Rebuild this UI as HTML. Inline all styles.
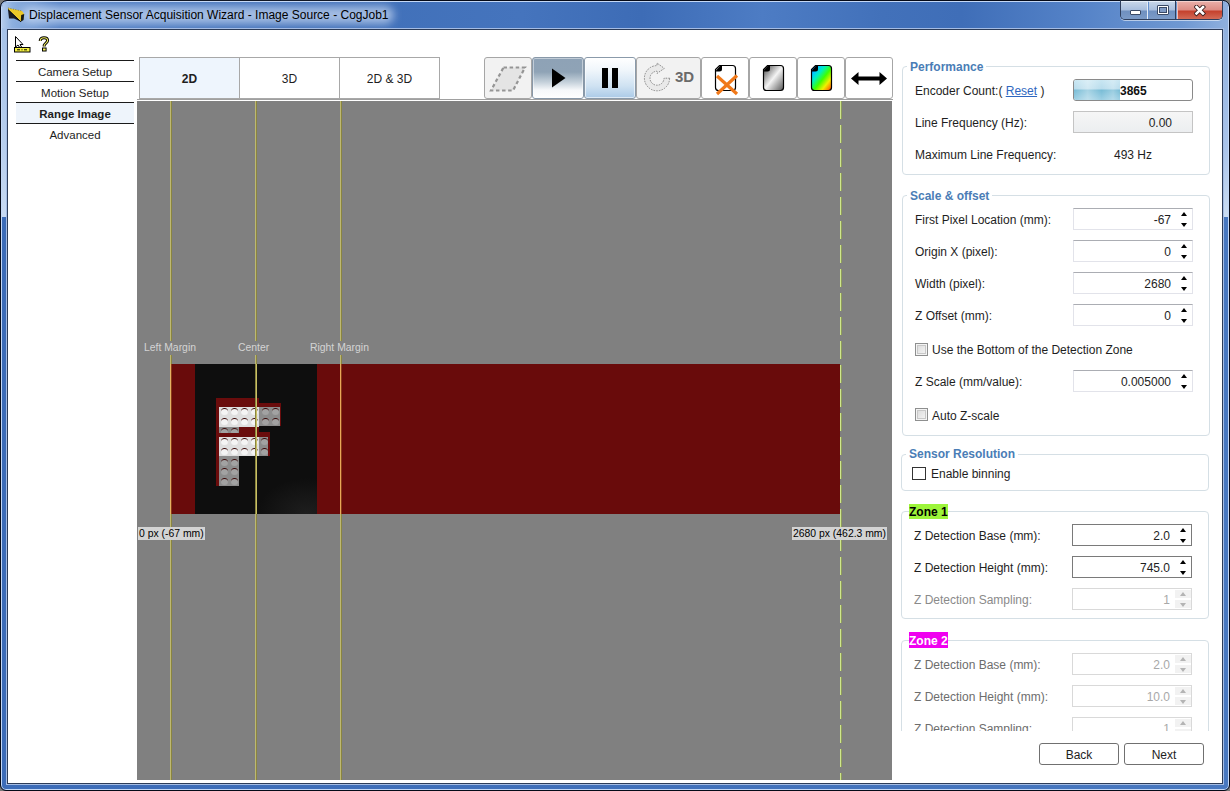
<!DOCTYPE html>
<html><head><meta charset="utf-8">
<style>
*{box-sizing:border-box;margin:0;padding:0}
html,body{width:1230px;height:791px;overflow:hidden;background:#7a7a7a}
body{position:relative;font-family:"Liberation Sans",sans-serif;font-size:12px;color:#1e1e1e}
.a{position:absolute}
.t{position:absolute;white-space:nowrap;line-height:14px;font-size:12px}
#frame{left:0;top:0;width:1230px;height:791px;border:1px solid #050a18;border-radius:7px 7px 6px 6px;box-shadow:inset 0 0 0 1px #c4d8f6;
 background:linear-gradient(90deg,#3c6cb8 0,#4070ba 600px,#4878c0 1230px)}
#tbar{left:2px;top:2px;width:1226px;height:27px;border-radius:5px 5px 0 0;
 background:linear-gradient(90deg,#b4cbeb 0px,#8eb0df 10px,#4f7ec4 58px,#3f6fb8 300px,#4574bd 520px,#3d6cb6 640px,#4d7cc4 760px,#4271ba 880px,#3f6eb8 960px,#5583c8 1080px,#6f98d2 1180px,#8fb0de 1226px)}
#glow{left:22px;top:6px;width:372px;height:18px;border-radius:9px;background:rgba(222,234,252,.62);filter:blur(4px)}
#client{left:7px;top:29px;width:1216px;height:755px;border:1px solid #2c3c58;background:#fff;box-shadow:0 0 0 1px #a4bce4}

.grp{position:absolute;border:1px solid #d5dfe5;border-radius:4px}
.gt{position:absolute;white-space:nowrap;line-height:14px;font-size:12px;font-weight:bold;color:#4a7db6;background:#fff;padding:0 3px}
.sp{position:absolute;width:120px;height:22px;background:#fff;border:1px solid #e2e3ea;border-top-color:#abadb3}
.sp .v{position:absolute;right:21px;top:4px;line-height:14px;font-size:12px;text-align:right}
.sp .u{position:absolute;left:107px;top:3px;width:0;height:0;border-left:3.5px solid transparent;border-right:3.5px solid transparent;border-bottom:4px solid #000}
.sp .d{position:absolute;left:107px;top:14px;width:0;height:0;border-left:3.5px solid transparent;border-right:3.5px solid transparent;border-top:4px solid #000}
.sp.f{border-color:#7a7a7a}
.sp.x{border-color:#d9d9d9;background:#fff}
.sp.x .v{color:#a8a8a8}
.sp.x .bb{position:absolute;left:102px;top:1px;width:16px;height:18px;background:linear-gradient(#f2f2f2 0,#f2f2f2 8px,#fff 8px,#fff 10px,#f2f2f2 10px,#f2f2f2 18px)}
.sp.x .u{border-bottom-color:#b4b4b4}
.sp.x .d{border-top-color:#b4b4b4}
.cb{position:absolute;width:13px;height:13px;border:1px solid #8e8f8f;background:linear-gradient(135deg,#d8d8d8,#f8f8f8);box-shadow:inset 0 0 0 1px #f4f4f4,inset 0 0 0 2px #c8c8c8}
</style></head><body>
<div id="frame" class="a"></div>
<div id="tbar" class="a"></div>
<div id="glow" class="a"></div>
<div class="a" style="left:2px;top:28px;width:5px;height:189px;background:linear-gradient(#a6c2e8,#b8cfee 120px,#c8daf2 189px)"></div>
<div class="a" style="left:1223px;top:28px;width:5px;height:189px;background:linear-gradient(#8fb0de,#aac4ea 120px,#cadcf2 189px)"></div>
<div id="client" class="a"></div>
<!-- title -->
<svg class="a" style="left:7px;top:7px" width="19" height="17" viewBox="0 0 19 17">
 <path d="M1 1 L15 4 L17.2 7 L14 14.5 L1 2.5 Z" fill="#ecc828"/>
 <path d="M1 1 L15 4" stroke="#7a6a20" stroke-width="0.7" stroke-dasharray="1 1.5"/>
 <path d="M1 2.5 L2 11.5 L7 11.5 L13.8 14.8 Z" fill="#1c1c24"/>
 <path d="M14.2 8 L17.2 7 L16.6 13 L13.8 14.8 Z" fill="#1a1a10"/>
 <path d="M1 2.5 L13.8 14.8" stroke="#000" stroke-width="1"/>
</svg>
<div class="t" style="left:29px;top:8px;font-size:12px;color:#000">Displacement Sensor Acquisition Wizard - Image Source - CogJob1</div>
<!-- window buttons -->
<div class="a" style="left:1120px;top:0px;width:103px;height:20px;border:1px solid #2e3e5c;border-top-color:#1a2434;border-radius:0 0 5px 5px;overflow:hidden;box-shadow:0 1px 0 rgba(255,255,255,.55)">
 <div class="a" style="left:0;top:0;width:27px;height:19px;background:linear-gradient(#cad8ea 0,#a8bedd 9px,#6f90c0 10px,#7d9cc8 19px);border-right:1px solid #e4ecf6;box-shadow:inset 0 1px 0 #e8f0fa"></div>
 <div class="a" style="left:28px;top:0;width:27px;height:19px;background:linear-gradient(#cad8ea 0,#a8bedd 9px,#6f90c0 10px,#7d9cc8 19px);border-right:1px solid #2e3e5c;box-shadow:inset 0 1px 0 #e8f0fa"></div>
 <div class="a" style="left:56px;top:0;width:46px;height:19px;background:linear-gradient(#eab0aa 0,#dc8c84 9px,#c4402c 10px,#d4705c 19px);box-shadow:inset 0 1px 0 #f4d0cc,inset 1px 0 0 #f0c0b8"></div>
 <div class="a" style="left:9px;top:9px;width:11px;height:5px;background:#fff;border:1px solid #3a4a66;border-radius:1px"></div>
 <div class="a" style="left:36px;top:4px;width:12px;height:10px;border:1px solid #3a4a66;border-radius:1px;background:#fff"></div>
 <div class="a" style="left:38px;top:6px;width:8px;height:6px;background:#7f9ac4;border:1px solid #3a4a66"></div>
 <svg class="a" style="left:73px;top:4px" width="12" height="12" viewBox="0 0 12 12"><path d="M2.5 2 L9 8.5 M9 2 L2.5 8.5" stroke="#3a2020" stroke-width="4.4" stroke-linecap="square"/><path d="M2.5 2 L9 8.5 M9 2 L2.5 8.5" stroke="#fff" stroke-width="2.6" stroke-linecap="square"/></svg>
</div>
<!-- toolbar small icons -->
<svg class="a" style="left:13px;top:35px" width="18" height="18" viewBox="0 0 18 18">
 <path d="M2.5 1.5 L2.5 12 L5 10 L7 13 L8.5 12 L7 9.5 L10 9.5 Z" fill="#fff" stroke="#000" stroke-width="1"/>
 <rect x="1.5" y="12.5" width="15.5" height="4.5" fill="#f4f040" stroke="#000" stroke-width="1"/>
 <path d="M4 14.8 H7 M8.5 14.8 H9.5 M11 14.8 H14" stroke="#000" stroke-width="1"/>
</svg>
<svg class="a" style="left:37px;top:35px" width="14" height="18" viewBox="0 0 14 18">
 <path d="M3.2 6 C3.2 3.6 4.8 2.8 7 2.8 C9.4 2.8 10.6 4 10.6 5.6 C10.6 7.6 8 8.2 7.2 10.2 L7.2 11.6" fill="none" stroke="#000" stroke-width="3"/>
 <path d="M3.2 6 C3.2 3.6 4.8 2.8 7 2.8 C9.4 2.8 10.6 4 10.6 5.6 C10.6 7.6 8 8.2 7.2 10.2 L7.2 11.6" fill="none" stroke="#f4f060" stroke-width="1.1"/>
 <rect x="5.5" y="13" width="3.6" height="3" fill="#f4f060" stroke="#000" stroke-width="1"/>
</svg>
<!-- left nav -->
<div class="a" style="left:16px;top:60px;width:118px;height:1px;background:#1a1a1a"></div>
<div class="a" style="left:16px;top:81px;width:118px;height:1px;background:#1a1a1a"></div>
<div class="a" style="left:16px;top:102px;width:118px;height:1px;background:#1a1a1a"></div>
<div class="a" style="left:16px;top:103px;width:118px;height:20px;background:#eef4fb"></div>
<div class="a" style="left:16px;top:123px;width:118px;height:1px;background:#1a1a1a"></div>
<div class="t" style="left:16px;width:118px;text-align:center;font-size:11.5px;top:65px">Camera Setup</div>
<div class="t" style="left:16px;width:118px;text-align:center;font-size:11.5px;top:86px">Motion Setup</div>
<div class="t" style="left:16px;width:118px;text-align:center;font-size:11.5px;top:107px;font-weight:bold">Range Image</div>
<div class="t" style="left:16px;width:118px;text-align:center;font-size:11.5px;top:128px">Advanced</div>

<!-- tabs -->
<div class="a" style="left:139px;top:57px;width:101px;height:42px;border:1px solid #a8a8a8;background:#eef5fd"></div>
<div class="a" style="left:239px;top:57px;width:101px;height:42px;border:1px solid #a8a8a8;background:#fff"></div>
<div class="a" style="left:339px;top:57px;width:101px;height:42px;border:1px solid #a8a8a8;background:#fff"></div>
<div class="t" style="left:139px;width:101px;text-align:center;top:72px;font-weight:bold">2D</div>
<div class="t" style="left:239px;width:101px;text-align:center;top:72px">3D</div>
<div class="t" style="left:339px;width:101px;text-align:center;top:72px">2D &amp; 3D</div>

<!-- tool buttons -->
<div class="a" style="left:484px;top:57px;width:48px;height:42px;border:1px solid #a6a6a6;border-radius:3px;background:#f2f2f2"></div>
<svg class="a" style="left:486px;top:62px" width="42" height="32" viewBox="0 0 42 32"><path d="M17.5 5.5 L39 5.5 L27 28.5 L5 28.5 Z" fill="#e4e4e4" stroke="#959595" stroke-width="2.2" stroke-dasharray="3.5 2.6"/></svg>
<div class="a" style="left:532px;top:57px;width:52px;height:42px;border:1px solid #8898a8;border-radius:3px;background:linear-gradient(#8ea2b6 0,#8fa3b6 14px,#c4d0da 24px,#f6f8fa 32px,#ffffff 41px);box-shadow:inset 0 0 0 1px rgba(255,255,255,.45)"></div>
<svg class="a" style="left:551px;top:68px" width="16" height="21" viewBox="0 0 16 21"><path d="M1 0.5 L14.5 10 L1 19.5 Z" fill="#000"/></svg>
<div class="a" style="left:584px;top:57px;width:52px;height:42px;border:1px solid #8a9aaa;border-radius:3px;background:linear-gradient(#ffffff 0,#f0f6fb 12px,#cfe2f2 28px,#a8c8e6 41px);box-shadow:inset 0 0 0 1px rgba(255,255,255,.6)"></div>
<div class="a" style="left:602px;top:68px;width:6px;height:20px;background:#000"></div>
<div class="a" style="left:612px;top:68px;width:6px;height:20px;background:#000"></div>
<div class="a" style="left:636px;top:57px;width:65px;height:42px;border:1px solid #a6a6a6;border-radius:3px;background:#f2f2f2"></div>
<svg class="a" style="left:638px;top:58px" width="36" height="38" viewBox="0 0 36 38">
 <path d="M31.6 20.2 A12.6 12.6 0 1 1 19 7.6 L19 5 L26.3 10.4 L19 15.4 L19 13.2 A7 7 0 1 0 26 20.2 Z" fill="#e9e9e9" stroke="#8a8a8a" stroke-width="1" stroke-dasharray="1.6 1.1"/>
</svg>
<div class="t" style="left:675px;top:69px;font-size:15px;line-height:16px;font-weight:bold;color:#6a6a6a">3D</div>
<div class="a" style="left:701px;top:57px;width:48px;height:42px;border:1px solid #a6a6a6;border-radius:3px;background:#fff"></div>
<svg class="a" style="left:714px;top:64px" width="26" height="34" viewBox="0 0 26 34">
 <path d="M5.5 1.5 L18.5 1.5 Q21.5 1.5 21.5 4.5 L21.5 23.5 Q21.5 26.5 18.5 26.5 L4.5 26.5 Q1.5 26.5 1.5 23.5 L1.5 5.5 Z" fill="#fff" stroke="#000" stroke-width="1.2"/>
 <path d="M1.2 7.5 L6.5 1.2 L8 1.2 L8 5 Q8 7.5 5.5 7.5 Z" fill="#000"/>
 <path d="M3 12 L23 30 M23 11.5 L3 30" stroke="#f07818" stroke-width="3.2"/>
</svg>
<div class="a" style="left:749px;top:57px;width:48px;height:42px;border:1px solid #a6a6a6;border-radius:3px;background:#fff"></div>
<svg class="a" style="left:762px;top:64px" width="24" height="28" viewBox="0 0 24 28">
 <defs><linearGradient id="gg" x1="0" y1="0" x2="1" y2="1"><stop offset="0" stop-color="#444"/><stop offset=".5" stop-color="#f4f4f4"/><stop offset="1" stop-color="#555"/></linearGradient></defs>
 <path d="M5.5 1.5 L18.5 1.5 Q21.5 1.5 21.5 4.5 L21.5 23.5 Q21.5 26.5 18.5 26.5 L4.5 26.5 Q1.5 26.5 1.5 23.5 L1.5 5.5 Z" fill="url(#gg)" stroke="#000" stroke-width="1.2"/>
 <path d="M1.2 7.5 L6.5 1.2 L8 1.2 L8 5 Q8 7.5 5.5 7.5 Z" fill="#000"/>
</svg>
<div class="a" style="left:797px;top:57px;width:48px;height:42px;border:1px solid #a6a6a6;border-radius:3px;background:#fff"></div>
<svg class="a" style="left:810px;top:64px" width="24" height="28" viewBox="0 0 24 28">
 <defs><linearGradient id="cg" x1="0" y1="0" x2="1" y2="1"><stop offset="0" stop-color="#0040ff"/><stop offset=".2" stop-color="#00c8ff"/><stop offset=".35" stop-color="#00f0c0"/><stop offset=".55" stop-color="#40ff00"/><stop offset=".75" stop-color="#f0f000"/><stop offset=".9" stop-color="#ff8000"/><stop offset="1" stop-color="#ff2000"/></linearGradient></defs>
 <path d="M5.5 1.5 L18.5 1.5 Q21.5 1.5 21.5 4.5 L21.5 23.5 Q21.5 26.5 18.5 26.5 L4.5 26.5 Q1.5 26.5 1.5 23.5 L1.5 5.5 Z" fill="url(#cg)" stroke="#000" stroke-width="1.2"/>
 <path d="M1.2 7.5 L6.5 1.2 L8 1.2 L8 5 Q8 7.5 5.5 7.5 Z" fill="#000"/>
</svg>
<div class="a" style="left:845px;top:57px;width:48px;height:42px;border:1px solid #a6a6a6;border-radius:3px;background:#fff"></div>
<svg class="a" style="left:850px;top:71px" width="38" height="15" viewBox="0 0 38 15"><path d="M1 7.5 L8.5 1 L8.5 5.5 L29.5 5.5 L29.5 1 L37 7.5 L29.5 14 L29.5 9.5 L8.5 9.5 L8.5 14 Z" fill="#000"/></svg>
<!-- image view -->
<div class="a" style="left:137px;top:99px;width:756px;height:1px;background:#a0a0a0"></div>
<div class="a" style="left:137px;top:100px;width:756px;height:1px;background:#fff"></div>
<div id="view" class="a" style="left:137px;top:101px;width:755px;height:679px;background:#808080;overflow:hidden">
 <!-- red band: abs y 364..514, x 171..840 -->
 <div class="a" style="left:34px;top:263px;width:669px;height:150px;background:#690b0b"></div>
 <!-- dark rect x195..317 -->
 <div class="a" style="left:58px;top:263px;width:122px;height:150px;background:radial-gradient(ellipse 50px 36px at 112px 150px,#1e1e1e 0%,#0e0e0e 100%),#0e0e0e"></div>
 <!-- F shape -->
 <div class="a" style="left:79px;top:297px;width:43px;height:39px;background:#6a0c0c;"></div>
 <div class="a" style="left:122px;top:302px;width:22px;height:23px;background:#6a0c0c;"></div>
 <div class="a" style="left:79px;top:331px;width:54px;height:24px;background:#6a0c0c;"></div>
 <div class="a" style="left:79px;top:355px;width:3px;height:30px;background:#6a0c0c;"></div>
 <div class="a" style="left:82px;top:306px;width:40px;height:20px;background:#dedede;"></div>
 <div class="a" style="left:122px;top:306px;width:21px;height:19px;background:#8c8c8c;"></div>
 <div class="a" style="left:82px;top:326px;width:20px;height:6px;background:#8a8a8a;"></div>
 <div class="a" style="left:82px;top:336px;width:40px;height:19px;background:#dedede;"></div>
 <div class="a" style="left:122px;top:336px;width:9px;height:19px;background:#8c8c8c;"></div>
 <div class="a" style="left:82px;top:355px;width:20px;height:30px;background:#8c8c8c;"></div>
 <div class="a" style="left:83.5px;top:307.0px;width:7px;height:7px;border-radius:50%;background:#f4f4f4;border-top:1px solid #3a0808"></div>
 <div class="a" style="left:83.5px;top:316.5px;width:7px;height:7px;border-radius:50%;background:#f4f4f4;border-top:1px solid #3a0808"></div>
 <div class="a" style="left:83.5px;top:337.0px;width:7px;height:7px;border-radius:50%;background:#f4f4f4;border-top:1px solid #3a0808"></div>
 <div class="a" style="left:83.5px;top:346.5px;width:7px;height:7px;border-radius:50%;background:#f4f4f4;border-top:1px solid #3a0808"></div>
 <div class="a" style="left:93.5px;top:307.0px;width:7px;height:7px;border-radius:50%;background:#f4f4f4;border-top:1px solid #3a0808"></div>
 <div class="a" style="left:93.5px;top:316.5px;width:7px;height:7px;border-radius:50%;background:#f4f4f4;border-top:1px solid #3a0808"></div>
 <div class="a" style="left:93.5px;top:337.0px;width:7px;height:7px;border-radius:50%;background:#f4f4f4;border-top:1px solid #3a0808"></div>
 <div class="a" style="left:93.5px;top:346.5px;width:7px;height:7px;border-radius:50%;background:#f4f4f4;border-top:1px solid #3a0808"></div>
 <div class="a" style="left:103.5px;top:307.0px;width:7px;height:7px;border-radius:50%;background:#f4f4f4;border-top:1px solid #3a0808"></div>
 <div class="a" style="left:103.5px;top:316.5px;width:7px;height:7px;border-radius:50%;background:#f4f4f4;border-top:1px solid #3a0808"></div>
 <div class="a" style="left:103.5px;top:337.0px;width:7px;height:7px;border-radius:50%;background:#f4f4f4;border-top:1px solid #3a0808"></div>
 <div class="a" style="left:103.5px;top:346.5px;width:7px;height:7px;border-radius:50%;background:#f4f4f4;border-top:1px solid #3a0808"></div>
 <div class="a" style="left:113.5px;top:307.0px;width:7px;height:7px;border-radius:50%;background:#f4f4f4;border-top:1px solid #3a0808"></div>
 <div class="a" style="left:113.5px;top:316.5px;width:7px;height:7px;border-radius:50%;background:#f4f4f4;border-top:1px solid #3a0808"></div>
 <div class="a" style="left:113.5px;top:337.0px;width:7px;height:7px;border-radius:50%;background:#f4f4f4;border-top:1px solid #3a0808"></div>
 <div class="a" style="left:113.5px;top:346.5px;width:7px;height:7px;border-radius:50%;background:#f4f4f4;border-top:1px solid #3a0808"></div>
 <div class="a" style="left:124.5px;top:307.0px;width:7px;height:7px;border-radius:50%;background:#a2a2a2;border-top:1px solid #3a0808"></div>
 <div class="a" style="left:124.5px;top:316.5px;width:7px;height:7px;border-radius:50%;background:#a2a2a2;border-top:1px solid #3a0808"></div>
 <div class="a" style="left:134.5px;top:307.0px;width:7px;height:7px;border-radius:50%;background:#a2a2a2;border-top:1px solid #3a0808"></div>
 <div class="a" style="left:134.5px;top:316.5px;width:7px;height:7px;border-radius:50%;background:#a2a2a2;border-top:1px solid #3a0808"></div>
 <div class="a" style="left:123.5px;top:337.0px;width:7px;height:7px;border-radius:50%;background:#a2a2a2;border-top:1px solid #3a0808"></div>
 <div class="a" style="left:123.5px;top:346.5px;width:7px;height:7px;border-radius:50%;background:#a2a2a2;border-top:1px solid #3a0808"></div>
 <div class="a" style="left:84px;top:327px;width:7px;height:5px;overflow:hidden"><div class="a" style="left:0;top:0;width:7px;height:7px;border-radius:50%;background:#a2a2a2;border-top:1px solid #3a0808"></div></div>
 <div class="a" style="left:83.5px;top:357.5px;width:7px;height:7px;border-radius:50%;background:#a2a2a2;border-top:1px solid #3a0808"></div>
 <div class="a" style="left:83.5px;top:367.0px;width:7px;height:7px;border-radius:50%;background:#a2a2a2;border-top:1px solid #3a0808"></div>
 <div class="a" style="left:83.5px;top:376.5px;width:7px;height:7px;border-radius:50%;background:#a2a2a2;border-top:1px solid #3a0808"></div>
 <div class="a" style="left:94px;top:327px;width:7px;height:5px;overflow:hidden"><div class="a" style="left:0;top:0;width:7px;height:7px;border-radius:50%;background:#a2a2a2;border-top:1px solid #3a0808"></div></div>
 <div class="a" style="left:93.5px;top:357.5px;width:7px;height:7px;border-radius:50%;background:#a2a2a2;border-top:1px solid #3a0808"></div>
 <div class="a" style="left:93.5px;top:367.0px;width:7px;height:7px;border-radius:50%;background:#a2a2a2;border-top:1px solid #3a0808"></div>
 <div class="a" style="left:93.5px;top:376.5px;width:7px;height:7px;border-radius:50%;background:#a2a2a2;border-top:1px solid #3a0808"></div>
 <!-- margin lines -->
 <div class="a" style="left:33px;top:0;width:1px;height:679px;background:#bdb872"></div>
 <div class="a" style="left:34px;top:0;width:1px;height:679px;background:#8a8540"></div>
 <div class="a" style="left:118px;top:0;width:1px;height:679px;background:#bdb872"></div>
 <div class="a" style="left:119px;top:0;width:1px;height:679px;background:#8a8540"></div>
 <div class="a" style="left:203px;top:0;width:1px;height:679px;background:#bdb872"></div>
 <div class="a" style="left:204px;top:0;width:1px;height:679px;background:#8a8540"></div>
 <div class="a" style="left:703px;top:0;width:1px;height:679px;background:repeating-linear-gradient(#cfe68c 0,#cfe68c 18px,transparent 18px,transparent 24px)"></div>
 <div class="a" style="left:704px;top:0;width:1px;height:679px;background:repeating-linear-gradient(#8e9c5c 0,#8e9c5c 18px,transparent 18px,transparent 24px)"></div>
 <div class="a" style="left:33px;top:263px;width:1px;height:150px;background:#e6b264"></div>
 <div class="a" style="left:34px;top:263px;width:1px;height:150px;background:#8a3a18"></div>
 <div class="a" style="left:203px;top:263px;width:1px;height:150px;background:#e8a858"></div>
 <div class="a" style="left:204px;top:263px;width:1px;height:150px;background:#8a3a18"></div>
 <div class="a" style="left:118px;top:263px;width:1px;height:150px;background:#8a8440"></div>
 <div class="a" style="left:119px;top:263px;width:1px;height:150px;background:#c8c064"></div>
 <!-- labels -->
 <div class="t" style="left:5px;top:240px;font-size:10.4px;color:#d4d4d4;background:#808080;padding:0 2px 0 2px">Left Margin</div>
 <div class="t" style="left:99px;top:240px;font-size:10.4px;color:#d4d4d4;background:#808080;padding:0 2px">Center</div>
 <div class="t" style="left:171px;top:240px;font-size:10.4px;color:#d4d4d4;background:#808080;padding:0 2px">Right Margin</div>
 <div class="t" style="left:1px;top:426px;height:13px;line-height:13px;font-size:10.4px;color:#000;background:#d3d3d3;padding:0 1px">0 px (-67 mm)</div>
 <div class="t" style="left:655px;top:426px;height:13px;line-height:13px;font-size:10.4px;color:#000;background:#d3d3d3;padding:0 1px">2680 px (462.3 mm)</div>
</div>

<!-- right panel -->
<div class="grp" style="left:902px;top:66px;width:308px;height:109px"></div>
<div class="gt" style="left:907px;top:60px">Performance</div>
<div class="t" style="left:915px;top:84px">Encoder Count:( <span style="color:#2e67c0;text-decoration:underline">Reset</span> )</div>
<div class="a" style="left:1073px;top:79px;width:120px;height:22px;border:1px solid #8a8a8a;border-radius:3px;background:#fff;overflow:hidden">
 <div class="a" style="left:0;top:0;width:46px;height:20px;background:linear-gradient(#c8e6f2 0,#b8dcec 9px,#78bcd6 10px,#9ed0e4 20px)"></div>
 <div class="a" style="left:0;top:0;width:46px;height:20px;background:linear-gradient(90deg,rgba(255,255,255,.0) 0,rgba(255,255,255,.35) 30%,rgba(255,255,255,0) 60%,rgba(255,255,255,.25) 85%,rgba(255,255,255,0) 100%)"></div>
</div>
<div class="t" style="left:1120px;top:84px;font-weight:bold;color:#111">3865</div>
<div class="t" style="left:915px;top:116px">Line Frequency (Hz):</div>
<div class="a" style="left:1073px;top:111px;width:120px;height:22px;border:1px solid #c4c4c4;background:linear-gradient(#f6f6f6,#eceef0)"></div>
<div class="t" style="left:1073px;width:99px;text-align:right;top:116px">0.00</div>
<div class="t" style="left:915px;top:148px">Maximum Line Frequency:</div>
<div class="t" style="left:1114px;top:148px">493 Hz</div>

<div class="grp" style="left:902px;top:195px;width:308px;height:241px"></div>
<div class="gt" style="left:907px;top:189px">Scale &amp; offset</div>
<div class="t" style="left:915px;top:213px">First Pixel Location (mm):</div>
<div class="sp" style="left:1073px;top:208px"><div class="v">-67</div><div class="u"></div><div class="d"></div></div>
<div class="t" style="left:915px;top:245px">Origin X (pixel):</div>
<div class="sp" style="left:1073px;top:240px"><div class="v">0</div><div class="u"></div><div class="d"></div></div>
<div class="t" style="left:915px;top:277px">Width (pixel):</div>
<div class="sp" style="left:1073px;top:272px"><div class="v">2680</div><div class="u"></div><div class="d"></div></div>
<div class="t" style="left:915px;top:309px">Z Offset (mm):</div>
<div class="sp" style="left:1073px;top:304px"><div class="v">0</div><div class="u"></div><div class="d"></div></div>
<div class="cb" style="left:915px;top:343px"></div>
<div class="t" style="left:932px;top:343px">Use the Bottom of the Detection Zone</div>
<div class="t" style="left:915px;top:375px">Z Scale (mm/value):</div>
<div class="sp" style="left:1073px;top:370px"><div class="v">0.005000</div><div class="u"></div><div class="d"></div></div>
<div class="cb" style="left:915px;top:408px"></div>
<div class="t" style="left:932px;top:409px">Auto Z-scale</div>

<div class="grp" style="left:901px;top:454px;width:308px;height:37px"></div>
<div class="gt" style="left:906px;top:447px">Sensor Resolution</div>
<div class="a" style="left:912px;top:467px;width:14px;height:13px;border:1px solid #333;background:#fff"></div>
<div class="t" style="left:931px;top:467px">Enable binning</div>

<div class="a" style="left:894px;top:500px;width:320px;height:231px;overflow:hidden">
 <div class="grp" style="left:7px;top:11px;width:308px;height:108px"></div>
 <div class="t" style="left:15px;top:4px;width:39px;height:15px;background:#9cf53a"></div>
 <div class="t" style="left:15px;top:5px;font-weight:bold;color:#000">Zone 1</div>
 <div class="t" style="left:20px;top:29px">Z Detection Base (mm):</div>
 <div class="sp f" style="left:178px;top:24px"><div class="v">2.0</div><div class="u"></div><div class="d"></div></div>
 <div class="t" style="left:20px;top:61px">Z Detection Height (mm):</div>
 <div class="sp f" style="left:178px;top:56px"><div class="v">745.0</div><div class="u"></div><div class="d"></div></div>
 <div class="t" style="left:20px;top:93px;color:#8a8a8a">Z Detection Sampling:</div>
 <div class="sp x" style="left:178px;top:88px"><div class="bb"></div><div class="v">1</div><div class="u"></div><div class="d"></div></div>

 <div class="grp" style="left:7px;top:140px;width:308px;height:120px"></div>
 <div class="t" style="left:15px;top:132px;width:39px;height:16px;background:#f000f0"></div>
 <div class="t" style="left:15px;top:134px;font-weight:bold;color:#fff">Zone 2</div>
 <div class="t" style="left:20px;top:158px;color:#6d6d6d">Z Detection Base (mm):</div>
 <div class="sp x" style="left:178px;top:153px"><div class="bb"></div><div class="v">2.0</div><div class="u"></div><div class="d"></div></div>
 <div class="t" style="left:20px;top:190px;color:#6d6d6d">Z Detection Height (mm):</div>
 <div class="sp x" style="left:178px;top:185px"><div class="bb"></div><div class="v">10.0</div><div class="u"></div><div class="d"></div></div>
 <div class="t" style="left:20px;top:222px;color:#6d6d6d">Z Detection Sampling:</div>
 <div class="sp x" style="left:178px;top:217px"><div class="bb"></div><div class="v">1</div><div class="u"></div><div class="d"></div></div>
</div>

<!-- nav buttons -->
<div class="a" style="left:1039px;top:743px;width:80px;height:22px;border:1px solid #707070;border-radius:3px;background:#fff"></div>
<div class="t" style="left:1039px;width:80px;text-align:center;top:748px">Back</div>
<div class="a" style="left:1124px;top:743px;width:80px;height:22px;border:1px solid #707070;border-radius:3px;background:#fff"></div>
<div class="t" style="left:1124px;width:80px;text-align:center;top:748px">Next</div>
</body></html>
